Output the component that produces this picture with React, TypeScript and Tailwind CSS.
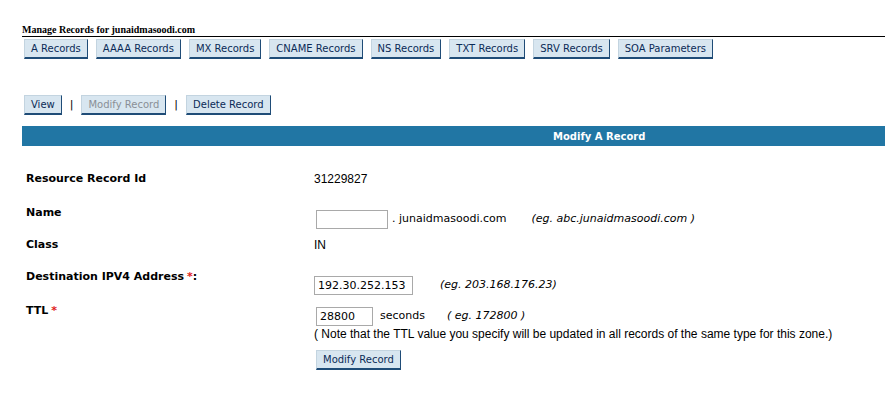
import React from "react";

const tabs = [
  "A Records",
  "AAAA Records",
  "MX Records",
  "CNAME Records",
  "NS Records",
  "TXT Records",
  "SRV Records",
  "SOA Parameters",
];

const verdana = { fontFamily: "'DejaVu Sans', Verdana, sans-serif" };
const arial = { fontFamily: "'Liberation Sans', Arial, sans-serif" };

function Btn({ children, disabled }: { children: React.ReactNode; disabled?: boolean }) {
  return (
    <button
      style={verdana}
      className={
        "h-[20px] px-[6px] text-[10px] leading-none bg-[#d8e6f0] border border-t-[#c3d4e0] border-l-[#c3d4e0] border-r-[#1f4c77] border-b-[#1f4c77] border-b-2 " +
        (disabled ? "text-[#8a8f96]" : "text-[#0b2b57]")
      }
    >
      {children}
    </button>
  );
}

function Req() {
  return <span className="text-[#e0201b] ml-[3px]">*</span>;
}

export default function App() {
  return (
    <div className="w-full h-[408px] bg-white pl-[22px] pt-[23px] text-black overflow-hidden">
      {/* header */}
      <div
        style={{ fontFamily: "'Liberation Serif', 'Times New Roman', serif" }}
        className="text-[10px] font-bold leading-[13px] border-b border-black"
      >
        Manage Records for junaidmasoodi.com
      </div>
      <div className="flex gap-[8px] mt-[2px] pl-[2px]">
        {tabs.map((t) => (
          <Btn key={t}>{t}</Btn>
        ))}
      </div>

      {/* actions */}
      <div className="flex items-center mt-[36px] pl-[2px] text-[11px]" style={verdana}>
        <Btn>View</Btn>
        <span className="mx-[8px]">|</span>
        <Btn disabled>Modify Record</Btn>
        <span className="mx-[8px]">|</span>
        <Btn>Delete Record</Btn>
      </div>

      <div
        style={verdana}
        className="mt-[11px] h-[20px] bg-[#2176a4] flex items-center pl-[531px] text-[10px] font-bold text-white"
      >
        Modify A Record
      </div>

      {/* form */}
      <div className="text-[11px]">
        <div className="flex items-start mt-[26px] leading-[14px]">
          <div style={verdana} className="w-[292px] pl-[4px] font-bold">Resource Record Id</div>
          <div style={arial} className="text-[12px]">31229827</div>
        </div>

        <div className="flex items-start mt-[20px]">
          <div style={verdana} className="w-[292px] pl-[4px] font-bold leading-[14px]">Name</div>
          <div style={verdana} className="flex items-center mt-[4px] pl-[2px]">
            <input className="w-[72px] h-[19px] border border-[#a9a9a9] outline-none" />
            <span className="ml-[4px]">. junaidmasoodi.com</span>
            <span className="ml-[25px] italic">(eg. abc.junaidmasoodi.com )</span>
          </div>
        </div>

        <div className="flex items-start mt-[9px] leading-[14px]">
          <div style={verdana} className="w-[292px] pl-[4px] font-bold">Class</div>
          <div style={arial} className="text-[12px]">IN</div>
        </div>

        <div className="flex items-start mt-[18px]">
          <div style={verdana} className="w-[292px] pl-[4px] font-bold leading-[14px]">
            Destination IPV4 Address<Req />:
          </div>
          <div style={verdana} className="flex items-center mt-[6px]">
            <input
              defaultValue="192.30.252.153"
              style={verdana}
              className="w-[99px] h-[19px] border border-[#a9a9a9] px-[3px] text-[11px] outline-none"
            />
            <span className="ml-[27px] italic">(eg. 203.168.176.23)</span>
          </div>
        </div>

        <div className="flex items-start mt-[9px]">
          <div style={verdana} className="w-[292px] pl-[4px] font-bold leading-[14px]">
            TTL<Req />
          </div>
          <div className="mt-[3px]">
            <div style={verdana} className="flex items-center pl-[2px]">
              <input
                defaultValue="28800"
                style={verdana}
                className="w-[57px] h-[19px] border border-[#a9a9a9] px-[3px] text-[11px] outline-none"
              />
              <span className="ml-[7px]">seconds</span>
              <span className="ml-[22px] italic">( eg. 172800 )</span>
            </div>
            <div style={arial} className="text-[12px] leading-[14px] mt-[1px]">
              ( Note that the TTL value you specify will be updated in all records of the same type for this zone.)
            </div>
            <div className="mt-[9px] pl-[2px]">
              <Btn>Modify Record</Btn>
            </div>
          </div>
        </div>
      </div>
    </div>
  );
}
